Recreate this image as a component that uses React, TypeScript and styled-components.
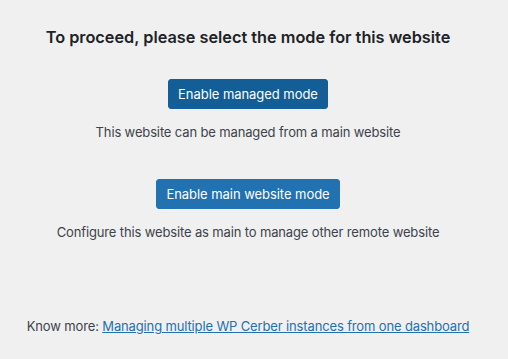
import React from "react";
import styled, { createGlobalStyle } from "styled-components";

const Global = createGlobalStyle`
  html, body { margin: 0; padding: 0; background: #f0f0f1; }
  body {
    font-family: Inter, "Liberation Sans", sans-serif;
    color: #3c434a;
    font-size: 13px;
    line-height: 1.4;
    letter-spacing: -0.14px;
  }
`;

const Page = styled.div`
  height: 359px;
  box-sizing: border-box;
  padding: 26px 20px 0 8px;
  display: flex;
  flex-direction: column;
  align-items: center;
`;

const Heading = styled.h2`
  margin: 0;
  font-size: 16.3px;
  font-weight: 600;
  color: #1d2327;
  line-height: 22px;
  letter-spacing: 0;
`;

const Option = styled.div<{ $top: number }>`
  margin-top: ${(p) => p.$top}px;
  display: flex;
  flex-direction: column;
  align-items: center;
  gap: 13px;
`;

const Button = styled.button<{ $dark?: boolean }>`
  font-family: inherit;
  font-size: 13px;
  letter-spacing: -0.05px;
  color: #fff;
  background: ${(p) => (p.$dark ? "#135e96" : "#2271b1")};
  border: 1px solid ${(p) => (p.$dark ? "#135e96" : "#2271b1")};
  border-radius: 3px;
  height: 30px;
  padding: 0 9px;
  line-height: 28px;
  cursor: pointer;
`;

const Note = styled.p`
  margin: 0;
  line-height: 20px;
`;

const Footer = styled.p`
  margin: auto 0 23px;
  line-height: 20px;
`;

const Link = styled.a`
  color: #2271b1;
  text-decoration: underline;
`;

export default function App() {
  return (
    <>
      <Global />
      <Page>
        <Heading>To proceed, please select the mode for this website</Heading>
        <Option $top={31}>
          <Button $dark>Enable managed mode</Button>
          <Note>This website can be managed from a main website</Note>
        </Option>
        <Option $top={37}>
          <Button>Enable main website mode</Button>
          <Note>Configure this website as main to manage other remote website</Note>
        </Option>
        <Footer>
          Know more:{" "}
          <Link href="#">Managing multiple WP Cerber instances from one dashboard</Link>
        </Footer>
      </Page>
    </>
  );
}
